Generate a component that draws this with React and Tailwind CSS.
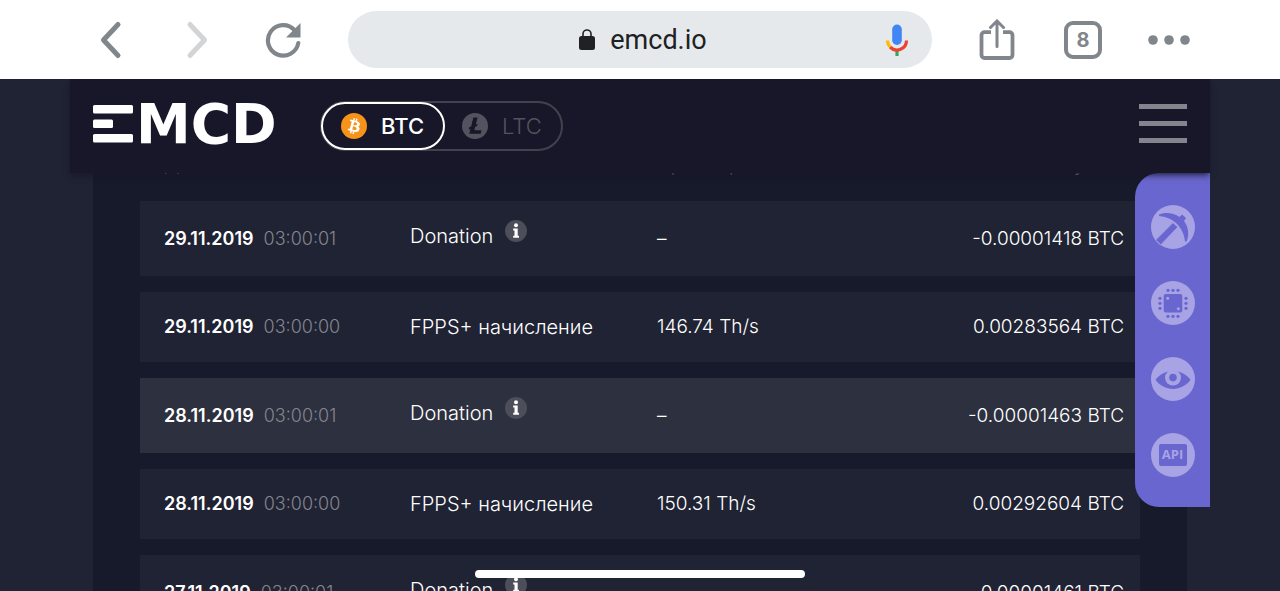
import { clsx } from "clsx";

const rows = [
    { date: "29.11.2019", time: "03:00:01", type: "Donation", info: true, hashrate: "–", amount: "-0.00001418 BTC" },
    { date: "29.11.2019", time: "03:00:00", type: "FPPS+ начисление", hashrate: "146.74 Th/s", amount: "0.00283564 BTC" },
    { date: "28.11.2019", time: "03:00:01", type: "Donation", info: true, active: true, hashrate: "–", amount: "-0.00001463 BTC" },
    { date: "28.11.2019", time: "03:00:00", type: "FPPS+ начисление", hashrate: "150.31 Th/s", amount: "0.00292604 BTC" },
    { date: "27.11.2019", time: "03:00:01", type: "Donation", info: true, hashrate: "–", amount: "-0.00001461 BTC" },
];

const ToolbarButton = ({ label, disabled, children }) => (
    <button
        type="button"
        aria-label={label}
        disabled={disabled}
        className="flex h-full w-[86px] items-center justify-center text-[#80868b] disabled:text-[#d3d4d5]"
    >
        {children}
    </button>
);

const BrowserBar = () => (
    <div className="relative z-30 flex h-[79px] shrink-0 items-center bg-white px-[68px]">
        <ToolbarButton label="Back">
            <svg width="24" height="40" viewBox="0 0 24 40" fill="none" stroke="currentColor" strokeWidth="5" strokeLinecap="round" strokeLinejoin="round">
                <path d="M19 4.5 4.5 20 19 35.5" />
            </svg>
        </ToolbarButton>
        <ToolbarButton label="Forward" disabled>
            <svg width="24" height="40" viewBox="0 0 24 40" fill="none" stroke="currentColor" strokeWidth="5" strokeLinecap="round" strokeLinejoin="round">
                <path d="M5 4.5 19.5 20 5 35.5" />
            </svg>
        </ToolbarButton>
        <ToolbarButton label="Reload">
            <svg width="38" height="38" viewBox="0 0 38 38">
                <path d="M34.3 22A15.3 15.3 0 1 1 30.5 9" fill="none" stroke="currentColor" strokeWidth="4.2" strokeLinecap="round" />
                <path d="M36.5 2V16.5H22Z" fill="currentColor" />
            </svg>
        </ToolbarButton>

        <button type="button" className="mx-[22px] flex h-[57px] flex-1 items-center rounded-full bg-[#e6e9eb] pr-5">
            <span className="flex flex-1 items-center justify-center gap-[15px] pl-14 font-['Roboto',sans-serif] text-[27px] leading-8 text-[#202124]">
                <svg width="16" height="21" viewBox="0 0 16 21">
                    <path d="M4 8V5a4 4 0 0 1 8 0V8" fill="none" stroke="currentColor" strokeWidth="1.6" />
                    <rect y="7" width="16" height="14" rx="2.5" fill="currentColor" />
                </svg>
                emcd.io
            </span>
            <svg width="30" height="34" viewBox="0 0 30 34" fill="none">
                <path d="M15 26.5V33" stroke="#34a853" strokeWidth="3.2" />
                <path d="M5.500 17.5A9.500 9.500 0 0 0 8.600 24.400" stroke="#fbbc04" strokeWidth="3.2" />
                <path d="M8.200 24.100A9.500 9.500 0 0 0 24.500 17.500" stroke="#ea4335" strokeWidth="3.2" />
                <rect x="10.2" y="1.5" width="9.6" height="20.5" rx="4.8" fill="#4285f4" />
            </svg>
        </button>

        <ToolbarButton label="Share">
            <svg width="36" height="42" viewBox="0 0 36 42" fill="none" stroke="currentColor" strokeWidth="3.8">
                <path d="M12 13.2H5.5A3 3 0 0 0 2.500 16.2V36A3 3 0 0 0 5.500 39H30.500A3 3 0 0 0 33.500 36V16.2A3 3 0 0 0 30.500 13.2H24" />
                <path d="M18 27.5V3M11.500 8.500 18 2 24.500 8.500" strokeWidth="3" strokeLinecap="round" />
            </svg>
        </ToolbarButton>
        <ToolbarButton label="Tabs">
            <span className="flex size-[38px] items-center justify-center rounded-[9px] border-4 border-current font-['Inter',sans-serif] text-xl font-bold">
                8
            </span>
        </ToolbarButton>
        <ToolbarButton label="More">
            <svg width="42" height="10" viewBox="0 0 42 10" fill="currentColor">
                <circle cx="5" cy="5" r="4.8" />
                <circle cx="21" cy="5" r="4.8" />
                <circle cx="37" cy="5" r="4.8" />
            </svg>
        </ToolbarButton>
    </div>
);

const Logo = () => (
    <a href="#home" aria-label="EMCD" className="mt-1 block">
        <svg width="195" height="38" viewBox="0 0 195 38" fill="#fff" className="overflow-visible">
            <rect y="0" width="40" height="8.5" rx="1.5" />
            <rect y="14.5" width="20" height="8.5" rx="1.5" />
            <rect y="29" width="40" height="8.5" rx="1.5" />
            <text x="43" y="38" className="font-['DejaVu_Sans',sans-serif] text-[55px] font-bold">MCD</text>
        </svg>
    </a>
);

const BitcoinIcon = () => (
    <svg width="26" height="26" viewBox="0 0 32 32">
        <circle cx="16" cy="16" r="16" fill="#f7931a" />
        <path
            fill="#fff"
            d="M23.189 14.020c.314-2.096-1.283-3.223-3.465-3.975l.708-2.840-1.728-.430-.690 2.765c-.454-.114-.920-.220-1.385-.326l.695-2.783L15.596 6l-.708 2.839c-.376-.086-.746-.170-1.104-.260l.002-.009-2.384-.595-.460 1.846s1.283.294 1.256.312c.700.175.826.638.805 1.006l-.806 3.235c.048.012.110.030.180.057l-.183-.045-1.130 4.532c-.086.212-.303.531-.793.410.018.025-1.256-.313-1.256-.313l-.858 1.978 2.250.561c.418.105.828.215 1.231.318l-.715 2.872 1.727.430.708-2.840c.472.127.930.245 1.378.357l-.706 2.828 1.728.430.715-2.866c2.948.558 5.164.333 6.097-2.333.752-2.146-.037-3.385-1.588-4.192 1.130-.260 1.980-1.003 2.207-2.538zm-3.950 5.538c-.533 2.147-4.148.986-5.320.695l.950-3.805c1.172.293 4.929.872 4.370 3.110zm.535-5.569c-.487 1.953-3.495.960-4.470.717l.860-3.450c.975.243 4.118.696 3.610 2.733z"
        />
    </svg>
);

const LitecoinIcon = () => (
    <svg width="26" height="26" viewBox="0 0 32 32">
        <circle cx="16" cy="16" r="16" fill="currentColor" />
        <path
            fill="#171729"
            d="M10.4 19.4 8.200 20.300 8.900 17.600 11.200 16.700 14 5.500H19.200L17 14.200 19.300 13.300 18.600 16 16.200 17 15.200 21.200H24L22.900 25.500H8.900Z"
        />
    </svg>
);

const CoinSwitch = () => (
    <div className="ml-8 flex h-[50px] rounded-full border-2 border-[#42424f] font-medium">
        <button
            type="button"
            aria-pressed="true"
            className="-m-px flex w-[124px] items-center gap-[14px] rounded-full border-2 border-white pl-[18px] text-[22px] text-white"
        >
            <BitcoinIcon />
            BTC
        </button>
        <button
            type="button"
            aria-pressed="false"
            className="flex w-[117px] items-center gap-[14px] pl-[18px] text-[22px] font-light text-[#53535f]"
        >
            <LitecoinIcon />
            LTC
        </button>
    </div>
);

const SiteHeader = () => (
    <header className="relative z-10 mx-[70px] flex h-[94px] shrink-0 items-start bg-[#171729] px-[23px] pt-[22px] shadow-md shadow-[#171729]/60">
        <Logo />
        <CoinSwitch />
        <button type="button" aria-label="Menu" className="mt-[3px] ml-auto flex w-12 flex-col gap-3">
            <span className="h-[5px] w-full bg-[#84848e]" />
            <span className="h-[5px] w-full bg-[#84848e]" />
            <span className="h-[5px] w-full bg-[#84848e]" />
        </button>
    </header>
);

const InfoButton = () => (
    <button type="button" aria-label="Info" className="mb-2">
        <svg width="22" height="22" viewBox="0 0 22 22">
            <circle cx="11" cy="11" r="11" fill="#4c4e59" />
            <circle cx="11" cy="5.3" r="2" fill="#fff" />
            <path d="M8.200 8.600H12.700V15.700H14V17.700H8.200V15.700H9.500V10.600H8.200Z" fill="#fff" />
        </svg>
    </button>
);

const PayoutsTable = () => (
    <table className="w-full table-fixed border-separate border-spacing-x-0 border-spacing-y-4 text-left text-[19px] leading-6 font-light text-white">
        <thead>
            <tr className="h-8 align-top text-[#8a8b95]">
                <th className="w-[27%] pl-6 font-light">Дата</th>
                <th className="w-[24.7%] font-light">Тип</th>
                <th className="w-[20%] font-light">Ср. хешрейт</th>
                <th className="pr-4 text-right font-light">Сумма</th>
            </tr>
        </thead>
        <tbody>
            {rows.map((row) => (
                <tr
                    key={row.date + row.time}
                    className={clsx(row.info ? "h-[75px]" : "h-[70px]", row.active ? "bg-[#2d303e]" : "bg-[#202333]")}
                >
                    <td className="pl-6 text-lg leading-6 whitespace-nowrap">
                        <span className="font-semibold">{row.date}</span>
                        <span className="ml-[10px] text-[#84858f]">{row.time}</span>
                    </td>
                    <td className="text-xl leading-6 whitespace-nowrap">
                        {row.info ? (
                            <div className="flex items-center gap-3 pb-2">
                                <span className="pt-0.5">{row.type}</span>
                                <InfoButton />
                            </div>
                        ) : (
                            row.type
                        )}
                    </td>
                    <td className="whitespace-nowrap">{row.hashrate}</td>
                    <td className="pr-4 text-right whitespace-nowrap">{row.amount}</td>
                </tr>
            ))}
        </tbody>
    </table>
);

const PickaxeIcon = () => (
    <svg width="44" height="44" viewBox="0 0 44 44">
        <circle cx="22" cy="22" r="22" fill="#a7a3e4" />
        <g fill="#6a66cf">
            <path d="M8 9.5C14 6.500 23 8 28.500 12L31 9.500 35 13 33 16C37.500 22 38.500 30 35.500 36.500H34C33 28.500 30 22.500 25 18 20.500 14 15 11.500 8 11Z" />
            <path
                d="M22 17.5 26.800 22.200 9.700 40 4.500 35Z"
                stroke="#a7a3e4"
                strokeWidth="1"
            />
        </g>
    </svg>
);

const ChipIcon = () => (
    <svg width="44" height="44" viewBox="0 0 44 44">
        <circle cx="22" cy="22" r="22" fill="#a7a3e4" />
        <g fill="#6a66cf">
            <rect x="12.7" y="13" width="18.6" height="18.6" rx="2" />
            {[17, 22, 27].map((p) => (
                <g key={p}>
                    <circle cx={p} cy="9.3" r="1.6" />
                    <circle cx={p} cy="35.3" r="1.6" />
                    <circle cx="9" cy={p + 0.3} r="1.6" />
                    <circle cx="35" cy={p + 0.3} r="1.6" />
                </g>
            ))}
        </g>
        <circle cx="16.7" cy="17.3" r="1.5" fill="#a7a3e4" />
        <circle cx="27.3" cy="27.7" r="1.5" fill="#a7a3e4" />
    </svg>
);

const EyeIcon = () => (
    <svg width="44" height="44" viewBox="0 0 44 44">
        <circle cx="22" cy="22" r="22" fill="#a7a3e4" />
        <path d="M4.500 22.800C13 11 31 11 39.500 22.800 31 35 13 35 4.500 22.800Z" fill="#6a66cf" />
        <circle cx="22" cy="20.6" r="8" fill="#a7a3e4" />
        <circle cx="22" cy="20.6" r="3.8" fill="#6a66cf" />
    </svg>
);

const ApiIcon = () => (
    <span className="flex size-11 items-center justify-center rounded-full bg-[#a7a3e4]">
        <span className="flex h-[22px] w-7 items-center justify-center rounded-[2px] bg-[#6a66cf] font-['Open_Sans',sans-serif] text-[13px] font-bold text-[#a7a3e4]">
            API
        </span>
    </span>
);

const SideMenu = () => (
    <nav className="absolute top-0 right-[70px] flex w-[75px] flex-col items-center gap-8 rounded-l-3xl bg-[#6a66cf] pt-8 pb-[30px]">
        <a href="#workers" aria-label="Workers"><PickaxeIcon /></a>
        <a href="#devices" aria-label="Devices"><ChipIcon /></a>
        <a href="#watchers" aria-label="Watchers"><EyeIcon /></a>
        <a href="#api" aria-label="API"><ApiIcon /></a>
    </nav>
);

const App = () => (
    <div className="relative flex h-screen flex-col overflow-hidden bg-[#202333] font-['Inter',sans-serif]">
        <BrowserBar />
        <SiteHeader />
        <main className="relative min-h-0 flex-1">
            <section className="mx-[93px] flow-root h-full bg-[#171a2a] px-[47px]">
                <div className="-mt-9">
                    <PayoutsTable />
                </div>
            </section>
            <SideMenu />
        </main>
        {/* home indicator */}
        <div className="absolute bottom-[13px] left-1/2 z-30 h-2 w-[330px] -translate-x-1/2 rounded-full bg-white" />
    </div>
);

export default App;
